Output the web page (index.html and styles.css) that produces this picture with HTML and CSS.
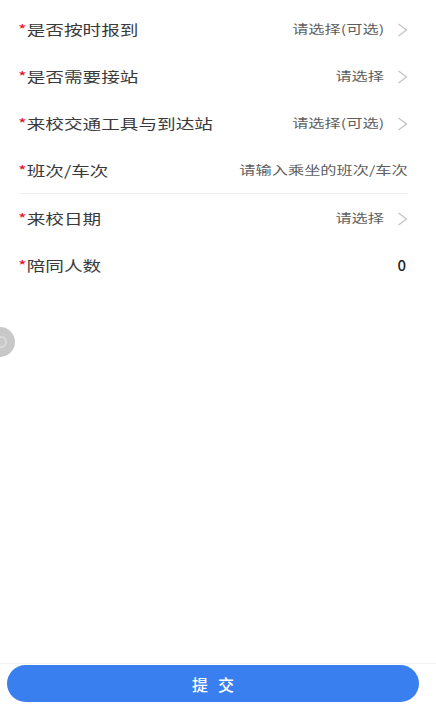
FILE: index.html
```html
<!DOCTYPE html>
<html lang="zh-CN">
<head>
<meta charset="utf-8">
<title>报到信息</title>
<link rel="stylesheet" href="styles.css">
</head>
<body>
<div class="page">
  <main class="form">
    <div class="row">
      <span class="label"><span class="star">*</span>是否按时报到</span>
      <span class="value"><span class="vtext">请选择(可选)</span><svg class="arrow" viewBox="0 0 11 14"><path d="M1.5 1 L9.5 7 L1.5 13" fill="none" stroke="#c4c4c4" stroke-width="1.3"/></svg></span>
    </div>
    <div class="row">
      <span class="label"><span class="star">*</span>是否需要接站</span>
      <span class="value"><span class="vtext">请选择</span><svg class="arrow" viewBox="0 0 11 14"><path d="M1.5 1 L9.5 7 L1.5 13" fill="none" stroke="#c4c4c4" stroke-width="1.3"/></svg></span>
    </div>
    <div class="row">
      <span class="label"><span class="star">*</span>来校交通工具与到达站</span>
      <span class="value"><span class="vtext">请选择(可选)</span><svg class="arrow" viewBox="0 0 11 14"><path d="M1.5 1 L9.5 7 L1.5 13" fill="none" stroke="#c4c4c4" stroke-width="1.3"/></svg></span>
    </div>
    <div class="row row-input">
      <span class="label"><span class="star">*</span>班次/车次</span>
      <span class="value"><span class="vtext">请输入乘坐的班次/车次</span></span>
    </div>
    <div class="row">
      <span class="label"><span class="star">*</span>来校日期</span>
      <span class="value"><span class="vtext">请选择</span><svg class="arrow" viewBox="0 0 11 14"><path d="M1.5 1 L9.5 7 L1.5 13" fill="none" stroke="#c4c4c4" stroke-width="1.3"/></svg></span>
    </div>
    <div class="row">
      <span class="label"><span class="star">*</span>陪同人数</span>
      <span class="value"><span class="num">0</span></span>
    </div>
  </main>
  <footer class="bar">
    <button class="submit" type="button">提交</button>
  </footer>
</div>
<div class="float-ball"><span class="ball-inner"></span></div>
</body>
</html>
```

FILE: styles.css
```css
html, body {
  margin: 0;
  padding: 0;
  background: #ffffff;
}

body {
  font-family: "Noto Sans CJK SC", "Noto Sans", sans-serif;
  color: #333333;
}

.page {
  height: 710px;
  display: flex;
  flex-direction: column;
}

.form {
  flex: 1;
  margin: 0 28px 0 18px;
  padding-top: 5px;
}

.row {
  height: 47px;
  display: flex;
  align-items: center;
  justify-content: space-between;
}

.row-input {
  border-bottom: 1px solid #eeeeee;
}

.label {
  display: inline-block;
  font-size: 14px;
  line-height: 20px;
  color: #3a3a3a;
  transform: scaleX(1.33);
  transform-origin: left center;
  white-space: nowrap;
}

.star {
  color: #ee0a24;
}

.value {
  display: flex;
  align-items: center;
}

.vtext {
  display: inline-block;
  font-size: 12px;
  line-height: 18px;
  color: #5e5e5e;
  transform: scaleX(1.35);
  transform-origin: right center;
  white-space: nowrap;
}

.arrow {
  width: 11px;
  height: 14px;
  margin-left: 13px;
  margin-top: 2px;
}

.num {
  font-size: 15px;
  font-weight: 500;
  color: #222222;
  margin-right: 2px;
}

.bar {
  border-top: 1px solid #f1f1f1;
  padding: 1px 17px 8px 7px;
}

.submit {
  display: block;
  width: 100%;
  height: 37px;
  border: none;
  border-radius: 19px;
  background: #3a7fef;
  color: #ffffff;
  font-family: "Noto Sans CJK SC", "Noto Sans", sans-serif;
  font-size: 16px;
  font-weight: 500;
  letter-spacing: 10px;
  padding: 0 0 0 10px;
}

.float-ball {
  position: fixed;
  left: -15px;
  top: 327px;
  width: 30px;
  height: 30px;
  border-radius: 50%;
  background: #c8c8c8;
  display: flex;
  align-items: center;
  justify-content: flex-end;
}

.ball-inner {
  width: 8px;
  height: 8px;
  margin-right: 8px;
  border: 2px solid #dadada;
  border-radius: 50%;
}
```
